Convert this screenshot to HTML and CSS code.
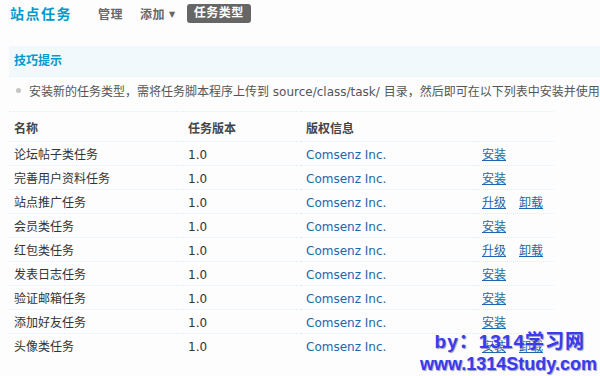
FILE: index.html
```html
<!DOCTYPE html>
<html lang="zh-CN">
  <head>
    <meta charset="UTF-8" />
    <title>站点任务</title>
    <link rel="stylesheet" href="styles.css">
  </head>
  <body>
    <div class="container">
      <div class="itemtitle">
        <h3>站点任务</h3>
        <ul class="tab">
          <li><a href="#">管理</a></li>
          <li><a href="#">添加<span class="caret">▼</span></a></li>
          <li class="current"><a href="#"><span>任务类型</span></a></li>
        </ul>
      </div>

      <div class="tips">
        <div class="partition">技巧提示</div>
        <ul class="tipsblock">
          <li>安装新的任务类型，需将任务脚本程序上传到 source/class/task/ 目录，然后即可在以下列表中安装并使用了</li>
        </ul>
      </div>

      <table class="tb">
        <tr class="header">
          <th class="c-name">名称</th>
          <th class="c-ver">任务版本</th>
          <th class="c-copy">版权信息</th>
          <th class="c-op"></th>
        </tr>
        <tr><td>论坛帖子类任务</td><td>1.0</td><td class="copy">Comsenz Inc.</td><td><a href="#">安装</a></td></tr>
        <tr><td>完善用户资料任务</td><td>1.0</td><td class="copy">Comsenz Inc.</td><td><a href="#">安装</a></td></tr>
        <tr><td>站点推广任务</td><td>1.0</td><td class="copy">Comsenz Inc.</td><td><a href="#">升级</a><a href="#">卸载</a></td></tr>
        <tr><td>会员类任务</td><td>1.0</td><td class="copy">Comsenz Inc.</td><td><a href="#">安装</a></td></tr>
        <tr><td>红包类任务</td><td>1.0</td><td class="copy">Comsenz Inc.</td><td><a href="#">升级</a><a href="#">卸载</a></td></tr>
        <tr><td>发表日志任务</td><td>1.0</td><td class="copy">Comsenz Inc.</td><td><a href="#">安装</a></td></tr>
        <tr><td>验证邮箱任务</td><td>1.0</td><td class="copy">Comsenz Inc.</td><td><a href="#">安装</a></td></tr>
        <tr><td>添加好友任务</td><td>1.0</td><td class="copy">Comsenz Inc.</td><td><a href="#">安装</a></td></tr>
        <tr><td>头像类任务</td><td>1.0</td><td class="copy">Comsenz Inc.</td><td><a href="#">安装</a><a href="#">卸载</a></td></tr>
      </table>
    </div>

    <div class="watermark">
      <div class="wm-by">by：1314学习网</div>
      <div class="wm-url">www.1314Study.com</div>
    </div>
  </body>
</html>
```

FILE: styles.css
```css
* {
  box-sizing: border-box;
}

html,
body {
  margin: 0;
  padding: 0;
  background: #fdfdfd;
  overflow: hidden;
}

body {
  font-family: "DejaVu Sans", "Noto Sans CJK SC", sans-serif;
  font-size: 12px;
  color: #333333;
}

a {
  color: #2366a8;
}

.container {
  padding: 0 0 0 9px;
  width: 760px;
  height: 376px;
  overflow: hidden;
}

/* title bar */
.itemtitle {
  display: flex;
  align-items: center;
  height: 26px;
  margin-bottom: 20px;
}
.itemtitle h3 {
  margin: 0 26px 0 1px;
  font-size: 14px;
  letter-spacing: 1.5px;
  color: #0099cc;
  font-weight: bold;
}
.tab {
  display: flex;
  align-items: center;
  list-style: none;
  margin: 0;
  padding: 0;
}
.tab li {
  margin-right: 17px;
}
.tab a {
  color: #666666;
  font-weight: bold;
  font-size: 12px;
  letter-spacing: 0.5px;
  text-decoration: none;
}
.tab .caret {
  font-size: 8px;
  margin-left: 4px;
  vertical-align: 2px;
}
.tab .current span {
  display: inline-block;
  background: #666666;
  color: #ffffff;
  padding: 0 7px;
  height: 19px;
  line-height: 19px;
  border-radius: 3px;
  margin-left: -6px;
}

/* tips */
.tips {
  width: 600px;
}
.partition {
  background: #f2f9fd;
  color: #0099cc;
  font-weight: bold;
  height: 31px;
  line-height: 30px;
  padding-left: 5px;
  border-bottom: 1px dotted #deeffb;
  background-clip: padding-box;
}
.tipsblock {
  margin: 0;
  padding: 7px 0 11px 7px;
  line-height: 16px;
  color: #555555;
  white-space: nowrap;
  list-style: none;
}
.tipsblock li::before {
  content: "";
  display: inline-block;
  width: 5px;
  height: 5px;
  border-radius: 50%;
  background: #c4c4c4;
  margin-right: 8px;
  vertical-align: 3px;
}

/* list table */
.tb {
  border-collapse: collapse;
  table-layout: fixed;
  width: 545px;
}
.tb th,
.tb td {
  text-align: left;
  padding: 5px 0 2px 5px;
  height: 24px;
  line-height: 16px;
  border-top: 1px dotted #deeffb;
  font-weight: normal;
  vertical-align: top;
  white-space: nowrap;
}
.tb th {
  font-weight: bold;
  color: #444444;
  height: 30px;
  padding-top: 9px;
}
.tb .c-name {
  width: 174px;
}
.tb .c-ver {
  width: 118px;
}
.tb .c-copy {
  width: 176px;
}
.tb .c-op {
  width: 77px;
}
.tb td.copy {
  color: #2366a8;
}
.tb td a {
  margin-right: 13px;
}

/* watermark overlay */
.watermark {
  position: absolute;
  right: 3px;
  bottom: 1px;
  text-align: right;
  font-family: "Liberation Sans", "Noto Sans CJK SC", sans-serif;
  font-weight: bold;
  font-size: 18px;
  line-height: 22px;
  color: #3a3af0;
  text-shadow: 1px 1px 1px #9a9ab8;
}
.wm-by {
  padding-right: 12px;
  font-size: 19px;
  letter-spacing: 1px;
}
```
